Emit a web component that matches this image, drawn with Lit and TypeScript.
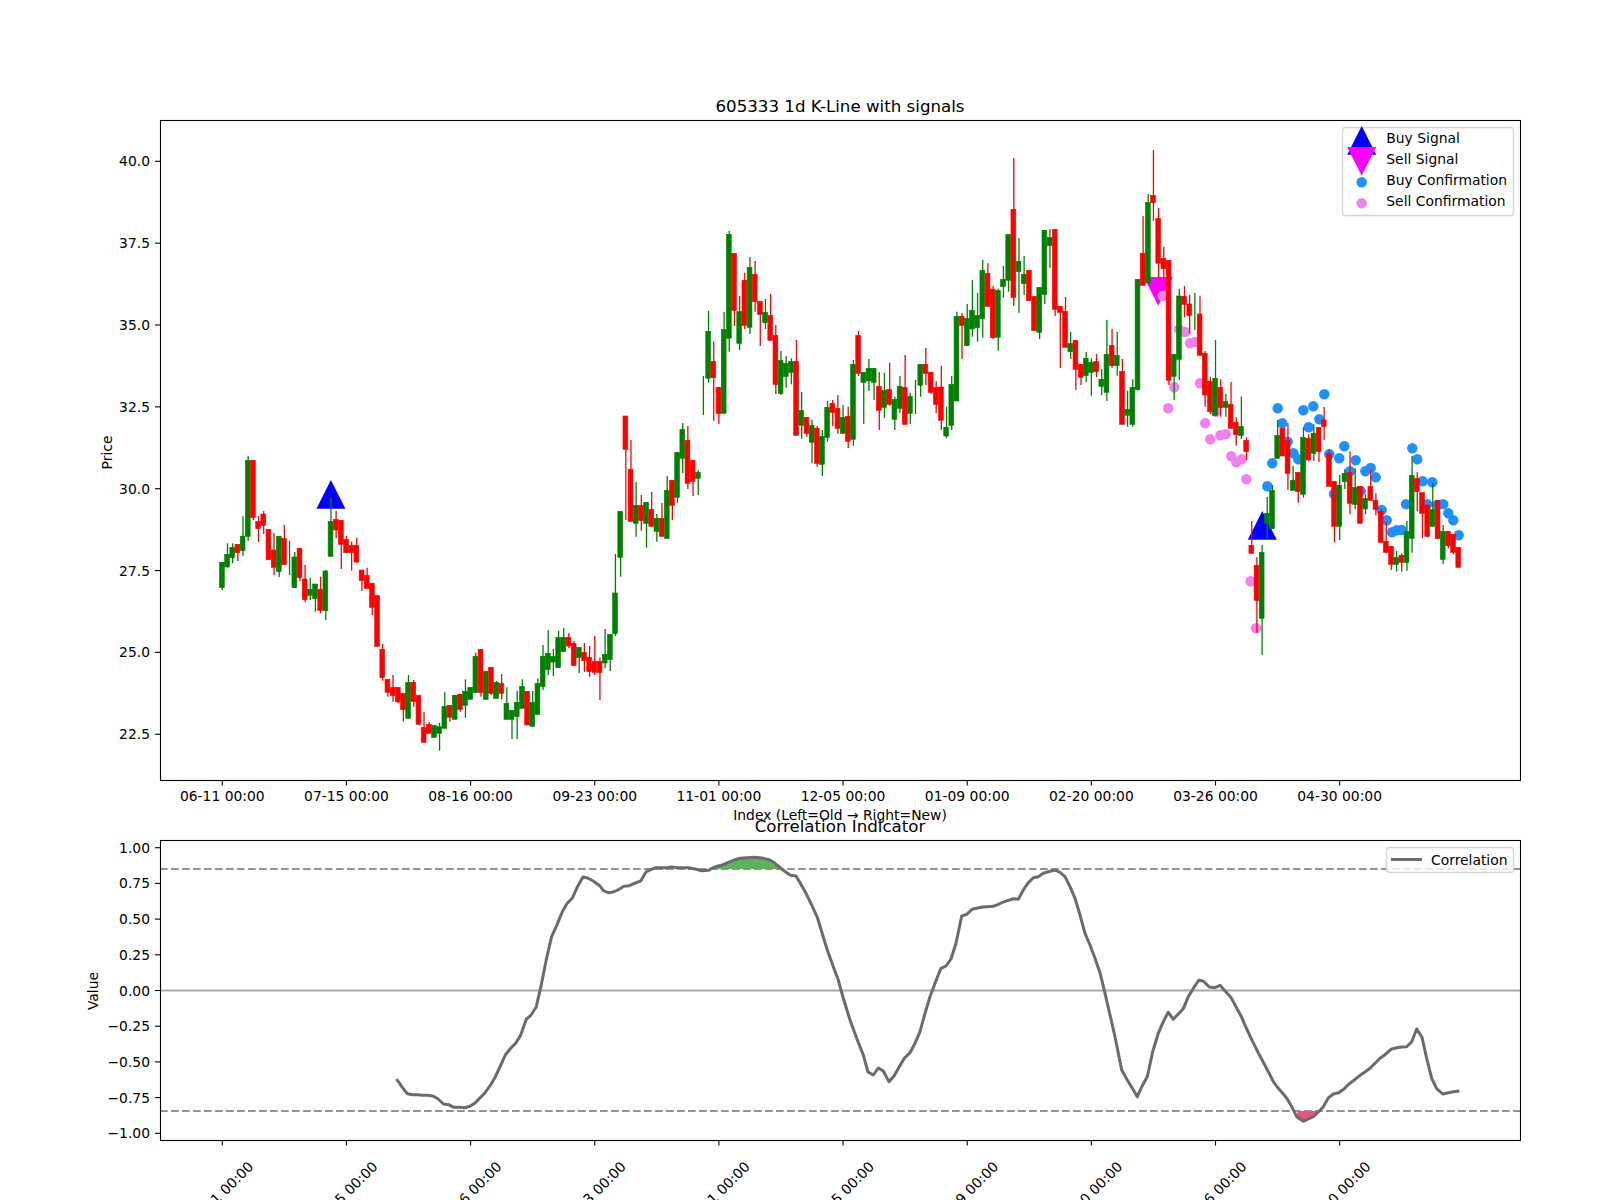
import { LitElement, html, svg, css } from "lit";
import { customElement } from "lit/decorators.js";

type Row = [number, number, number, number, number];
interface Candle { i: number; g: boolean; bt: number; bb: number; wt: number; wb: number; }

const G = 1, R = 0;
const candles: Candle[] = [];
// Rows are read in a 3x crop, so they are stored as crop coordinates: colour, body top, body bottom, wick top, wick bottom.
function seg(start: number, oy: number, rows: Row[]) {
  rows.forEach((r, k) => {
    candles.push({
      i: start + k, g: r[0] === G,
      bt: r[1] < 0 ? -1 : oy + r[1] / 3, bb: r[2] < 0 ? -1 : oy + r[2] / 3,
      wt: oy + r[3] / 3, wb: oy + r[4] / 3,
    });
  });
}

seg(0, 400, [
  [G,487,563,487,570],[G,463,501,430,503],[G,442,473,430,490],[R,433,458,433,483],[G,409,452,349,468],
  [G,181,409,168,422],[R,181,353,181,360],[R,364,386,348,426],[R,342,376,333,402],[R,388,479,388,479],
  [R,450,502,399,525],[G,409,515,409,531],[R,415,494,375,494],[G,-1,-1,422,525],[G,471,563,456,563],
  [R,445,533,445,543],[R,537,599,495,606],[G,568,586,533,600],[G,552,596,552,635],[R,568,632,530,640],
  [G,513,632,510,660],[G,364,469,292,469],[R,358,390,333,415],[R,361,433,361,507],[R,418,458,408,460],
  [R,436,458,425,512],[R,436,486,413,490],[R,510,542,510,573],[R,526,565,503,565],[R,550,622,550,645],
  [R,587,739,587,739],[R,748,833,732,842],[R,838,877,838,890],[R,862,887,825,905],[R,862,906,862,908],
  [R,880,929,880,965],[G,847,955,825,955],[R,847,905,840,920],[R,886,973,886,973],[R,982,1027,936,1027],
  [R,973,1000,965,1000],[G,976,1012,976,1012],[G,980,1000,968,1052],[G,919,985,876,985],[R,916,952,916,965],
  [G,886,958,886,958],[R,883,928,883,935],[G,874,916,838,953],[G,862,898,862,898],[G,769,878,758,878],
  [R,748,878,748,890],[G,814,898,814,898],[R,802,880,802,885],[G,847,895,843,895],[R,850,880,822,898],
  [G,910,958,862,958],[G,931,958,931,1017],[G,907,950,872,1017],[G,859,925,838,925],[R,874,975,874,975],
  [G,907,979,873,979],[G,850,943,835,945],
]);
seg(62, 560, [
  [G,289,380,255,390],[G,280,329,210,345],[G,289,306,267,348],[G,232,323,212,323],[G,232,275,203,275],
  [R,232,258,219,264],[R,250,317,243,317],[G,262,293,262,339],[R,277,302,249,336],[R,292,335,258,351],
  [R,304,337,228,345],[R,304,337,292,420],[G,283,309,207,325],[G,223,299,223,333],
]);
seg(76, 400, [
  [G,579,701,462,708],[G,334,472,334,530],[R,48,148,48,360],[R,208,364,120,364],[G,316,370,246,410],
  [R,316,361,285,392],[G,307,370,307,443],[R,328,379,276,379],[G,355,394,342,425],[R,355,409,309,409],
  [G,271,415,228,415],[R,241,316,241,360],[G,157,292,157,308],[G,88,175,69,219],[R,121,250,78,267],
  [R,181,244,181,288],[G,217,235,210,285],
]);
seg(93, 200, [
  [G,-1,-1,528,645],[G,394,535,333,548],[R,484,533,424,662],[R,562,640,562,672],[G,388,640,336,640],
  [G,103,415,93,455],[R,160,331,160,378],[G,334,430,288,450],[R,241,376,218,387],[G,202,382,171,402],
  [R,223,305,183,335],[R,304,343,304,438],[G,337,368,297,387],[R,346,421,282,421],[R,406,553,375,582],
  [G,481,580,453,585],[G,490,530,468,563],[G,485,517,475,553],[R,484,706,420,706],[G,631,676,576,716],
  [R,652,700,652,710],[G,676,727,660,790],[R,685,790,678,800],[G,709,793,690,828],[G,622,712,603,725],
  [R,610,638,600,678],[R,625,685,585,702],[G,652,700,615,700],[R,649,724,620,744],[G,493,718,480,738],
  [R,406,520,393,528],[G,517,547,517,672],[G,505,543,477,573],[G,505,547,505,600],[R,559,631,516,690],
  [G,571,622,518,654],[R,568,613,488,617],[G,598,658,590,690],[G,559,625,528,638],[R,562,673,465,673],
  [G,589,640,578,672],[G,-1,-1,540,642],[G,493,556,493,590],[R,493,520,444,555],[R,517,577,517,582],
  [R,562,613,544,640],
]);
seg(139, 130, [
  [R,771,871,707,900],[G,892,918,830,925],[G,763,886,738,900],[G,559,813,545,813],[R,559,586,550,687],
  [G,565,647,522,647],[G,541,597,450,620],[G,556,593,489,635],[G,421,566,390,623],[R,430,529,400,529],
  [R,478,623,468,627],[G,481,622,476,662],[G,448,470,408,503],[G,313,451,313,485],[R,238,502,84,528],
  [G,394,425,324,548],[G,433,461,378,495],[R,421,512,421,512],[R,499,602,499,602],[G,472,607,472,627],
  [G,301,493,301,522],[G,322,347,297,413],[R,298,538,298,558],[R,529,547,529,714],[R,544,652,501,652],
  [G,640,665,606,687],[R,631,718,631,780],[R,703,742,703,765],[G,685,737,666,757],[G,697,727,685,797],
  [R,694,725,672,741],[G,748,769,717,795],[G,673,787,570,813],[R,646,707,597,713],[G,676,707,606,737],
  [R,724,883,687,883],[G,838,856,782,890],[G,772,883,748,890],[G,448,779,448,782],[R,370,466,258,466],
  [G,217,459,192,459],[R,196,218,60,272],[R,265,400,234,445],[R,385,416,350,445],[R,391,751,391,765],
  [G,673,739,673,810],[G,498,688,476,750],[R,499,523,468,562],[R,522,557,495,612],[G,-1,-1,489,600],
  [R,552,676,497,676],
]);
seg(190, 340, [
  [R,40,165,33,200],[R,124,215,110,222],[G,115,226,0,226],[R,142,203,118,230],[G,184,202,162,230],
  [R,193,265,126,265],[R,247,284,232,317],[G,259,287,170,297],[R,301,335,292,360],[R,616,640,543,640],
  [R,676,781,652,878],[G,637,835,615,945],[G,520,550,471,595],[G,451,566,435,566],[G,286,355,240,355],
  [R,265,348,265,348],[R,301,400,250,450],[G,421,451,378,451],[R,397,455,397,488],[G,292,463,262,473],
  [R,295,360,283,364],[G,280,340,253,363],[R,262,335,262,366],[R,240,260,201,300],[R,340,439,327,439],
  [R,424,559,424,607],[G,436,559,405,600],[G,400,425,388,447],[R,397,490,334,523],[G,442,493,385,508],
  [R,439,550,439,550],[G,475,507,463,523],[R,439,481,387,481],[R,481,508,460,526],[R,514,607,507,607],
  [R,604,637,545,640],[R,619,673,619,690],[G,652,673,633,695],[R,646,667,640,695],[G,574,667,543,692],
  [G,406,595,348,638],[R,415,455,397,514],[R,458,520,458,595],[R,495,589,495,592],[G,508,559,429,559],
  [R,481,596,481,598],[G,574,658,555,672],[R,574,617,574,625],[R,583,637,583,643],[R,622,682,622,682],
]);

const cx = (i: number) => 222.3 + 5.173 * i;

const violet: [number, number][] = [
  [1162.7,296],[1179,329.3],[1185,332],[1190,343.3],[1195,342],[1174.3,387.3],[1168.3,408.3],[1200,383.3],
  [1205.3,423.3],[1215.7,411.7],[1210.3,439.3],[1220.3,435.3],[1225.7,434.3],[1231.3,456.3],[1236.3,462.3],
  [1241.7,459.3],[1246.3,479.3],[1250.7,581.3],[1256,628.3],
];
const blue: [number, number][] = [
  [1267.3,486.3],[1272.3,463.3],[1277.7,408.3],[1282.3,423.3],[1287.7,441.7],[1293.3,453.3],[1298.3,459.3],
  [1303.3,410.3],[1308.7,427.3],[1313.3,406.3],[1319.3,419.3],[1324.3,394.3],[1329.3,454.3],[1334,494],
  [1339.3,458.3],[1344.3,446.3],[1350,471.3],[1355.7,460.3],[1360.7,491.3],[1365.3,471.3],[1370.7,468],
  [1375.7,477.3],[1381.7,510],[1386.7,520.3],[1392,532.3],[1396.7,530.3],[1401.7,530],[1406,504.3],
  [1412.3,448.3],[1417.3,459.3],[1422.7,481.3],[1427.3,504.3],[1432.3,482.3],[1437.7,505],[1443.3,504.3],
  [1448.3,513.3],[1453.3,520.3],[1458.7,535.3],
];

const lineA: [number, number][] = [
  [1038,897],[1052,920],[1066,941],[1080,944],[1093,944],[1107,946],[1120,946],[1135,949],[1147,957],[1161,972],
  [1175,974],[1188,982],[1203,982],[1217,983],[1230,979],[1243,970],[1257,953],[1270,938],[1284,915],[1297,890],
  [1310,858],[1323,825],[1337,805],[1350,790],[1363,766],[1378,717],[1390,706],[1404,680],[1416,620],[1430,540],
  [1444,470],[1458,435],[1472,395],[1485,370],[1498,355],[1512,320],[1526,291],[1540,295],[1553,303],
];
const lineB: [number, number][] = [
  [0,318],[10,332],[25,338],[40,336],[55,329],[72,319],[88,317],[103,310],[122,303],[138,276],[152,269],[168,263],
  [185,263],[200,263],[215,261],[232,263],[265,263],[285,267],[305,272],[325,271],[340,263],[355,258],[370,254],
  [385,247],[405,239],[420,235],[440,233],[465,232],[485,234],[510,240],[525,250],[545,267],[560,278],[572,286],
  [588,288],[600,308],[618,340],[635,375],[652,412],[668,465],[682,510],[700,560],[715,600],[730,655],[750,720],
  [770,775],[790,825],[804,876],[820,885],[835,864],[850,873],[867,905],[882,888],[898,860],[913,835],[930,818],
  [945,790],[960,755],[975,700],[990,650],[1005,610],[1022,566],[1038,558],[1053,537],[1068,490],[1085,408],
  [1100,403],[1116,388],[1133,384],[1148,381],[1163,380],[1180,379],[1195,373],[1210,366],[1225,361],[1240,356],
  [1255,358],[1270,330],[1285,308],[1300,293],[1315,290],[1330,280],[1350,274],[1365,270],[1380,277],[1395,290],
  [1410,320],[1425,355],[1440,405],[1455,460],[1470,495],[1485,535],
];
const lineC: [number, number][] = [
  [0,458],[15,520],[30,585],[45,650],[65,750],[82,780],[97,805],[112,830],[127,797],[142,770],[158,695],[175,640],
  [190,605],[205,577],[220,598],[235,582],[250,566],[265,530],[281,503],[297,480],[312,485],[328,501],[345,503],
  [360,496],[375,513],[392,531],[408,560],[425,592],[440,627],[458,665],[473,695],[490,727],[505,755],[520,785],
  [535,805],[550,822],[562,837],[575,860],[590,890],[610,904],[625,897],[640,890],[655,876],[670,860],[685,834],
  [700,822],[716,818],[732,807],[747,792],[763,780],[780,766],[795,756],[810,745],[825,730],[840,715],[855,704],
  [873,688],[890,683],[905,681],[920,680],[935,665],[950,627],[966,652],[980,715],[995,775],[1010,806],[1028,822],
  [1045,818],[1060,815],[1078,813],
];
const pts = (l: [number, number][], ox: number, oy: number, fx: number) =>
  l.map(([x, y]) => `${(ox + x / fx).toFixed(1)},${(oy + y / 3).toFixed(1)}`);
const corr = [...pts(lineA, 0, 780, 2.618), ...pts(lineB, 600, 780, 3), ...pts(lineC, 1100, 820, 3)].join(" ");
const greenFill = pts(
  [[340,267],[340,263],[355,258],[370,254],[385,247],[405,239],[420,235],[440,233],[465,232],[485,234],[510,240],[525,250],[545,267]],
  600, 780, 3).join(" ");
const redFill = pts([[593,873],[590,890],[610,904],[625,897],[640,890],[652,873]], 1100, 820, 3).join(" ");

const tickIdx = [0, 24, 48, 72, 96, 120, 144, 168, 192, 216];
const tickLbl = ["06-11 00:00","07-15 00:00","08-16 00:00","09-23 00:00","11-01 00:00","12-05 00:00","01-09 00:00","02-20 00:00","03-26 00:00","04-30 00:00"];
const priceTicks = [22.5, 25, 27.5, 30, 32.5, 35, 37.5, 40];
const priceY = (p: number) => 161.3 + (40 - p) * 32.74;
const corrTicks = [1, 0.75, 0.5, 0.25, 0, -0.25, -0.5, -0.75, -1];
const corrY = (v: number) => 990.5 - v * 142.8;
const fmt = (v: number) => (v < 0 ? "\u2212" : "") + Math.abs(v).toFixed(2);

const tri = (x: number, top: number, up: boolean) =>
  up ? `${x},${top} ${x - 14.5},${top + 28.7} ${x + 14.5},${top + 28.7}`
     : `${x - 14.5},${top} ${x + 14.5},${top} ${x},${top + 28.7}`;

@customElement("app-root")
export class AppRoot extends LitElement {
  static styles = css`
    :host { display: block; width: 1600px; height: 1200px; overflow: hidden; background: #fff; }
    .chart { display: block; width: 1600px; height: 1200px; }
    text { font-family: "DejaVu Sans", sans-serif; font-size: 13.89px; fill: #000; }
    .title { font-size: 16.67px; }
    .mid { text-anchor: middle; }
    .end { text-anchor: end; }
    .frame { fill: none; stroke: #000; stroke-width: 1.1px; }
    .plot { fill: #fff; }
    .tick { stroke: #000; stroke-width: 1.1px; }
    .wick { stroke-width: 1.3px; }
    .up { stroke: #008000; fill: #008000; }
    .down { stroke: #ff0000; fill: #ff0000; }
    .body { stroke-width: 0.6px; }
    .legend { fill: #fff; fill-opacity: 0.8; stroke: #ccc; stroke-opacity: 0.8; stroke-width: 1.4px; }
    .buy-sig { fill: #0000ff; }
    .sell-sig { fill: #ff00ff; }
    .buy-dot { fill: #1e90ff; }
    .sell-dot { fill: #ee82ee; }
    .corr { fill: none; stroke: #6b6b6b; stroke-width: 3px; stroke-linejoin: round; }
    .zero { stroke: #aaa; stroke-width: 2.08px; }
    .thresh { stroke: #939393; stroke-width: 2.08px; stroke-dasharray: 7.7 3.3; }
    .gfill { fill: #5fb05f; }
    .rfill { fill: #e4567a; }
  `;

  render() {
    const wicks = (c: Candle) => svg`<line class="wick ${c.g ? "up" : "down"}" x1=${cx(c.i)} x2=${cx(c.i)} y1=${c.wt} y2=${c.wb}></line>`;
    const bodies = (c: Candle) => c.bt < 0 ? null : svg`<rect class="body ${c.g ? "up" : "down"}" x=${cx(c.i) - 2.8} y=${c.bt} width="4.8" height=${c.bb - c.bt}></rect>`;
    return html`<svg class="chart" viewBox="0 0 1600 1200" xmlns="http://www.w3.org/2000/svg">
      <rect class="plot" x="160" y="120" width="1360" height="660"></rect>
      <polygon class="buy-sig" points=${tri(330.9, 480, true)}></polygon>
      <polygon class="buy-sig" points=${tri(1262.3, 511, true)}></polygon>
      <polygon class="sell-sig" points=${tri(1158.3, 277, false)}></polygon>
      ${violet.map(([x, y]) => svg`<circle class="sell-dot" cx=${x} cy=${y} r="5.2"></circle>`)}
      ${blue.map(([x, y]) => svg`<circle class="buy-dot" cx=${x} cy=${y} r="5.2"></circle>`)}
      ${candles.map((c) => svg`${wicks(c)}${bodies(c)}`)}
      <rect class="frame" x="160.5" y="120.5" width="1360" height="660"></rect>

      <rect class="legend" x="1342.5" y="127.5" width="171" height="88" rx="3"></rect>
      <polygon class="buy-sig" points=${tri(1361.7, 126, true)}></polygon>
      <polygon class="sell-sig" points=${tri(1361.7, 147, false)}></polygon>
      <circle class="buy-dot" cx="1361.7" cy="182.3" r="5.2"></circle>
      <circle class="sell-dot" cx="1361.7" cy="203.3" r="5.2"></circle>
      <text x="1386.3" y="143">Buy Signal</text>
      <text x="1386.3" y="164">Sell Signal</text>
      <text x="1386.3" y="185">Buy Confirmation</text>
      <text x="1386.3" y="206">Sell Confirmation</text>

      <text class="title mid" x="840" y="112">605333 1d K-Line with signals</text>
      ${tickIdx.map((i, k) => svg`
        <line class="tick" x1=${cx(i)} x2=${cx(i)} y1="781" y2="785.5"></line>
        <text class="mid" x=${cx(i)} y="801">${tickLbl[k]}</text>`)}
      ${priceTicks.map((p) => svg`
        <line class="tick" x1="155" x2="160" y1=${priceY(p)} y2=${priceY(p)}></line>
        <text class="end" x="150" y=${priceY(p) + 5}>${p.toFixed(1)}</text>`)}
      <text class="mid" transform="translate(112 452.5) rotate(-90)">Price</text>

      <rect class="plot" x="160" y="840" width="1360" height="300"></rect>
      <line class="zero" x1="160" x2="1520" y1="990.5" y2="990.5"></line>
      <line class="thresh" x1="160" x2="1520" y1="869" y2="869"></line>
      <line class="thresh" x1="160" x2="1520" y1="1111" y2="1111"></line>
      <polygon class="gfill" points=${greenFill}></polygon>
      <polygon class="rfill" points=${redFill}></polygon>
      <polyline class="corr" points=${corr}></polyline>
      <rect class="frame" x="160.5" y="840.5" width="1360" height="300"></rect>

      <rect class="legend" x="1386.5" y="847.5" width="127" height="25" rx="3"></rect>
      <line class="corr" x1="1391" x2="1422" y1="859.5" y2="859.5"></line>
      <text x="1431" y="864.5">Correlation</text>

      <text class="mid" x="840" y="820">Index (Left=Old → Right=New)</text>
      <text class="title mid" x="840" y="832">Correlation Indicator</text>
      ${tickIdx.map((i, k) => svg`
        <line class="tick" x1=${cx(i)} x2=${cx(i)} y1="1141" y2="1145.5"></line>
        <text class="mid" transform="translate(${cx(i) + 2} 1197.5) rotate(-45)">${tickLbl[k]}</text>`)}
      ${corrTicks.map((v) => svg`
        <line class="tick" x1="155" x2="160" y1=${corrY(v)} y2=${corrY(v)}></line>
        <text class="end" x="150" y=${corrY(v) + 5}>${fmt(v)}</text>`)}
      <text class="mid" transform="translate(98 991) rotate(-90)">Value</text>
    </svg>`;
  }
}
